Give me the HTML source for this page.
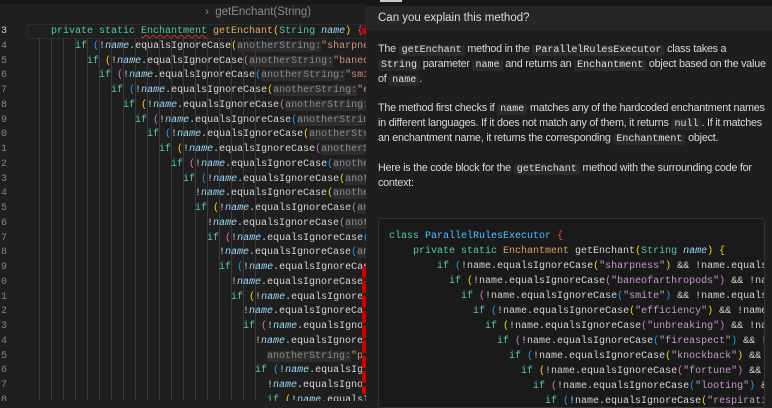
<!DOCTYPE html>
<html><head><style>
*{margin:0;padding:0;box-sizing:border-box}
body{width:772px;height:401px;overflow:hidden;background:#1f1f1f;position:relative;font-family:"Liberation Sans",sans-serif}
#ed{position:absolute;left:0;top:0;width:366px;height:401px;background:#1f1f1f;overflow:hidden}
.ln{position:absolute;left:-20px;width:27px;text-align:right;color:#858585;font:10px/15px "Liberation Mono",monospace}
.cl{position:absolute;white-space:pre;font:10px/15px "Liberation Mono",monospace;color:#d4d4d4}
.g{position:absolute;top:38px;bottom:0;width:1px;background:#3a3a3a}
.k{color:#4ec9b0}.n{color:#9cdcfe;font-style:italic}.f{color:#dcdcaa}.s{color:#ce9178}
.y{color:#ffd700}.p{color:#da70d6}.b{color:#179fff}
.h{color:#8b8b8b;background:#2d2d2d}
.t{color:#4ec9b0}
#rp{position:absolute;left:366px;top:0;width:406px;height:401px;background:#1e1e1e}
#q{position:absolute;left:0;top:6px;width:406px;height:25px;background:#262626;color:#ddd;font-size:11.5px;line-height:25px;padding-left:12px}
.para{position:absolute;left:12px;width:392px;color:#d8d8d8;font-size:10.8px;letter-spacing:-0.25px;line-height:15px}
.para code{font:10px "Liberation Mono",monospace;letter-spacing:0;background:#2a2a2a;color:#e0e0e0;padding:0 3px;border-radius:2px}
#cb{position:absolute;left:12px;top:218px;width:387px;height:190px;background:#1a1a1a;border:1px solid #333;border-radius:3px;overflow:hidden}
.rc{position:absolute;white-space:pre;font:10px/15px "Liberation Mono",monospace;color:#d4d4d4}
.pu{color:#c39ac9}.o{color:#d7a062}.r{color:#f14c4c}.cb2{color:#4fc1ff}
</style></head><body>
<div id="ed">
<div style="position:absolute;left:0;top:0;width:366px;height:4px;background:#181818"></div>
<div style="position:absolute;left:205px;top:6px;color:#8a8a8a;font-size:11.5px">›&nbsp; getEnchant(String)</div>
<div style="position:absolute;left:27px;top:24px;width:339px;height:15px;border:1px solid #2c2c2c"></div>
<div class="g" style="left:39px"></div><div class="g" style="left:51px"></div><div class="g" style="left:63px"></div><div class="g" style="left:75px"></div><div class="g" style="left:87px"></div><div class="g" style="left:99px"></div><div class="g" style="left:111px"></div><div class="g" style="left:123px"></div><div class="g" style="left:135px"></div><div class="g" style="left:147px"></div><div class="g" style="left:159px"></div><div class="g" style="left:171px"></div><div class="g" style="left:183px"></div><div class="g" style="left:195px"></div><div class="g" style="left:207px"></div><div class="g" style="left:219px"></div><div class="g" style="left:231px"></div><div class="g" style="left:243px"></div><div class="g" style="left:255px"></div>
<div class="ln" style="top:24px;color:#ccc">3</div><div class="ln" style="top:39px">4</div><div class="ln" style="top:54px">5</div><div class="ln" style="top:68px">6</div><div class="ln" style="top:83px">7</div><div class="ln" style="top:98px">8</div><div class="ln" style="top:113px">9</div><div class="ln" style="top:127px">0</div><div class="ln" style="top:142px">1</div><div class="ln" style="top:157px">2</div><div class="ln" style="top:172px">3</div><div class="ln" style="top:186px">4</div><div class="ln" style="top:201px">5</div><div class="ln" style="top:216px">6</div><div class="ln" style="top:231px">7</div><div class="ln" style="top:245px">8</div><div class="ln" style="top:260px">9</div><div class="ln" style="top:275px">0</div><div class="ln" style="top:290px">1</div><div class="ln" style="top:304px">2</div><div class="ln" style="top:319px">3</div><div class="ln" style="top:334px">4</div><div class="ln" style="top:349px">5</div><div class="ln" style="top:363px">6</div><div class="ln" style="top:378px">7</div><div class="ln" style="top:393px">8</div>
<div class="cl" style="left:51px;top:24px"><span class="k">private static </span><span class="t" style="text-decoration:underline wavy #c33">Enchantment</span> <span class="f" style="color:#e8a86a">getEnchant</span><span class="y">(</span><span class="k">String</span> <span class="n">name</span><span class="y">)</span> <span class="r">{</span></div>
<div class="cl" style="left:75px;top:39px"><span class="k">if</span> <span class="b">(</span>!<span class="n">name</span>.equalsIgnoreCase<span class="y">(</span><span class="h">anotherString:</span><span class="s">"sharpness"</span></div>
<div class="cl" style="left:87px;top:54px"><span class="k">if</span> <span class="y">(</span>!<span class="n">name</span>.equalsIgnoreCase<span class="p">(</span><span class="h">anotherString:</span><span class="s">"baneofarthropods"</span></div>
<div class="cl" style="left:99px;top:68px"><span class="k">if</span> <span class="p">(</span>!<span class="n">name</span>.equalsIgnoreCase<span class="b">(</span><span class="h">anotherString:</span><span class="s">"smite"</span></div>
<div class="cl" style="left:111px;top:83px"><span class="k">if</span> <span class="b">(</span>!<span class="n">name</span>.equalsIgnoreCase<span class="y">(</span><span class="h">anotherString:</span><span class="s">"efficiency"</span></div>
<div class="cl" style="left:123px;top:98px"><span class="k">if</span> <span class="y">(</span>!<span class="n">name</span>.equalsIgnoreCase<span class="p">(</span><span class="h">anotherString:</span></div>
<div class="cl" style="left:135px;top:113px"><span class="k">if</span> <span class="p">(</span>!<span class="n">name</span>.equalsIgnoreCase<span class="b">(</span><span class="h">anotherString:</span></div>
<div class="cl" style="left:147px;top:127px"><span class="k">if</span> <span class="b">(</span>!<span class="n">name</span>.equalsIgnoreCase<span class="y">(</span><span class="h">anotherString:</span></div>
<div class="cl" style="left:159px;top:142px"><span class="k">if</span> <span class="y">(</span>!<span class="n">name</span>.equalsIgnoreCase<span class="p">(</span><span class="h">anotherString:</span></div>
<div class="cl" style="left:171px;top:157px"><span class="k">if</span> <span class="p">(</span>!<span class="n">name</span>.equalsIgnoreCase<span class="b">(</span><span class="h">anotherString:</span></div>
<div class="cl" style="left:183px;top:172px"><span class="k">if</span> <span class="b">(</span>!<span class="n">name</span>.equalsIgnoreCase<span class="y">(</span><span class="h">anotherString:</span></div>
<div class="cl" style="left:195px;top:186px">!<span class="n">name</span>.equalsIgnoreCase<span class="y">(</span><span class="h">anotherString:</span></div>
<div class="cl" style="left:195px;top:201px"><span class="k">if</span> <span class="y">(</span>!<span class="n">name</span>.equalsIgnoreCase<span class="p">(</span><span class="h">anotherString:</span></div>
<div class="cl" style="left:207px;top:216px">!<span class="n">name</span>.equalsIgnoreCase<span class="p">(</span><span class="h">anotherString:</span></div>
<div class="cl" style="left:207px;top:231px"><span class="k">if</span> <span class="p">(</span>!<span class="n">name</span>.equalsIgnoreCase<span class="b">(</span><span class="h">anotherString:</span></div>
<div class="cl" style="left:219px;top:245px">!<span class="n">name</span>.equalsIgnoreCase<span class="b">(</span><span class="h">anotherString:</span></div>
<div class="cl" style="left:219px;top:260px"><span class="k">if</span> <span class="b">(</span>!<span class="n">name</span>.equalsIgnoreCase<span class="y">(</span></div>
<div class="cl" style="left:231px;top:275px">!<span class="n">name</span>.equalsIgnoreCase<span class="y">(</span></div>
<div class="cl" style="left:231px;top:290px"><span class="k">if</span> <span class="y">(</span>!<span class="n">name</span>.equalsIgnoreCase<span class="p">(</span></div>
<div class="cl" style="left:243px;top:304px">!<span class="n">name</span>.equalsIgnoreCase<span class="p">(</span></div>
<div class="cl" style="left:243px;top:319px"><span class="k">if</span> <span class="p">(</span>!<span class="n">name</span>.equalsIgnoreCase<span class="b">(</span></div>
<div class="cl" style="left:255px;top:334px">!<span class="n">name</span>.equalsIgnoreCase<span class="b">(</span></div>
<div class="cl" style="left:267px;top:349px"><span class="h">anotherString:</span><span class="s">"protection"</span></div>
<div class="cl" style="left:255px;top:363px"><span class="k">if</span> <span class="b">(</span>!<span class="n">name</span>.equalsIgnoreCase<span class="y">(</span></div>
<div class="cl" style="left:267px;top:378px">!<span class="n">name</span>.equalsIgnoreCase<span class="y">(</span></div>
<div class="cl" style="left:267px;top:393px"><span class="k">if</span> <span class="y">(</span>!<span class="n">name</span>.equalsIgnoreCase<span class="p">(</span></div>
<div style="position:absolute;left:362px;top:28px;width:4px;height:6px;background:#c00"></div>
<div style="position:absolute;left:362px;top:266px;width:4px;height:128px;background:repeating-linear-gradient(#c00 0 12px,#1f1f1f 12px 15px)"></div>
</div>
<div id="rp">
<div style="position:absolute;left:0;top:0;width:406px;height:6px;background:#181818"></div>
<div style="position:absolute;left:14px;top:0;width:22px;height:2px;background:#ccc"></div>
<div id="q">Can you explain this method?</div>
<div class="para" style="top:42px">The <code>getEnchant</code> method in the <code>ParallelRulesExecutor</code> class takes a <code>String</code> parameter <code>name</code> and returns an <code>Enchantment</code> object based on the value of <code>name</code>.</div>
<div class="para" style="top:101px">The method first checks if <code>name</code> matches any of the hardcoded enchantment names in different languages. If it does not match any of them, it returns <code>null</code>. If it matches an enchantment name, it returns the corresponding <code>Enchantment</code> object.</div>
<div class="para" style="top:161px">Here is the code block for the <code>getEnchant</code> method with the surrounding code for context:</div>
<div id="cb">
<div class="rc" style="left:10px;top:10px"><span class="k">class</span> <span class="cb2">ParallelRulesExecutor</span> <span class="r">{</span></div>
<div class="rc" style="left:34px;top:25px"><span class="k">private static</span> <span class="o">Enchantment</span> getEnchant<span class="y">(</span><span class="k">String</span> <span class="n">name</span><span class="y">)</span> <span class="y">{</span></div>
<div class="rc" style="left:58px;top:40px"><span class="k">if</span> <span class="b">(</span>!name.equalsIgnoreCase<span class="y">(</span><span class="pu">"sharpness"</span><span class="y">)</span> &amp;&amp; !name.equalsIgnoreCase</div>
<div class="rc" style="left:70px;top:55px"><span class="k">if</span> <span class="y">(</span>!name.equalsIgnoreCase<span class="p">(</span><span class="pu">"baneofarthropods"</span><span class="p">)</span> &amp;&amp; !name</div>
<div class="rc" style="left:82px;top:70px"><span class="k">if</span> <span class="p">(</span>!name.equalsIgnoreCase<span class="b">(</span><span class="pu">"smite"</span><span class="b">)</span> &amp;&amp; !name.equalsIgnoreCase</div>
<div class="rc" style="left:94px;top:85px"><span class="k">if</span> <span class="b">(</span>!name.equalsIgnoreCase<span class="y">(</span><span class="pu">"efficiency"</span><span class="y">)</span> &amp;&amp; !name</div>
<div class="rc" style="left:106px;top:100px"><span class="k">if</span> <span class="y">(</span>!name.equalsIgnoreCase<span class="p">(</span><span class="pu">"unbreaking"</span><span class="p">)</span> &amp;&amp; !name</div>
<div class="rc" style="left:118px;top:115px"><span class="k">if</span> <span class="p">(</span>!name.equalsIgnoreCase<span class="b">(</span><span class="pu">"fireaspect"</span><span class="b">)</span> &amp;&amp; !name</div>
<div class="rc" style="left:130px;top:130px"><span class="k">if</span> <span class="b">(</span>!name.equalsIgnoreCase<span class="y">(</span><span class="pu">"knockback"</span><span class="y">)</span> &amp;&amp; !name</div>
<div class="rc" style="left:142px;top:145px"><span class="k">if</span> <span class="y">(</span>!name.equalsIgnoreCase<span class="p">(</span><span class="pu">"fortune"</span><span class="p">)</span> &amp;&amp; !name</div>
<div class="rc" style="left:154px;top:160px"><span class="k">if</span> <span class="p">(</span>!name.equalsIgnoreCase<span class="b">(</span><span class="pu">"looting"</span><span class="b">)</span> &amp;&amp; !name</div>
<div class="rc" style="left:166px;top:175px"><span class="k">if</span> <span class="b">(</span>!name.equalsIgnoreCase<span class="y">(</span><span class="pu">"respiration"</span><span class="y">)</span></div>
</div>
</div>
</body></html>
